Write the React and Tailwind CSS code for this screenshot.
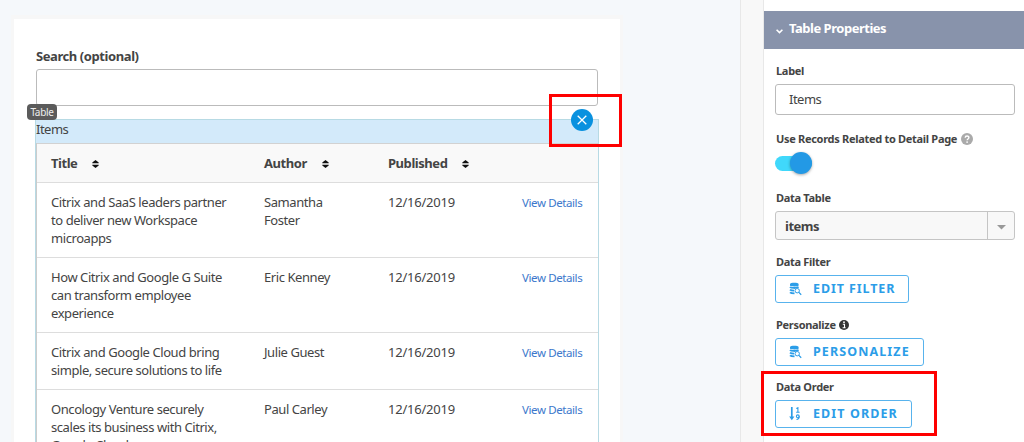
import React from "react";

const rows = [
  [["Citrix and SaaS leaders partner", "to deliver new Workspace", "microapps"], ["Samantha", "Foster"]],
  [["How Citrix and Google G Suite", "can transform employee", "experience"], ["Eric Kenney"]],
  [["Citrix and Google Cloud bring", "simple, secure solutions to life"], ["Julie Guest"]],
  [["Oncology Venture securely", "scales its business with Citrix,", "Google Cloud"], ["Paul Carley"]],
];

function Lines({ items }) {
  return items.map((t) => (
    <span key={t} className="block whitespace-nowrap">{t}</span>
  ));
}

function SortIcon() {
  return (
    <svg width="7" height="8" viewBox="0 0 7 8" className="mt-px" fill="#111">
      <path d="M3.500 0 6.700 2.600v.6H.3v-.6zM3.500 8 .3 5.400v-.6h6.400v.6z" />
    </svg>
  );
}

function DbSearchIcon() {
  return (
    <svg width="13" height="14" viewBox="0 0 13 14" fill="none" stroke="#2b9de8">
      <path d="M1 2c0-1.700 8.600-1.700 8.600 0v1.600c0 1.200-8.600 1.200-8.600 0z" fill="#2b9de8" stroke="none" />
      <path d="M1 5c1 1.200 6 1.200 8.600.2M1 7.600c1 .9 2.500 1 4 1M1 10.300c1 1 3 1.100 4.500 1.100" strokeWidth="1.900" />
      <circle cx="8.200" cy="8.700" r="2.200" strokeWidth="1" fill="#fff" />
      <path d="m9.900 10.400 2.300 2.300" strokeWidth="1.300" />
    </svg>
  );
}

function OrderIcon() {
  return (
    <svg width="13" height="14" viewBox="0 0 13 14" fill="none" stroke="#2b9de8">
      <path d="M2.800 0v11" strokeWidth="1.700" />
      <path d="M.2 9.500h5.200L2.800 13.200z" fill="#2b9de8" stroke="none" />
      <path d="M7.300 1.400 8.900.7V5M7.200 5.200h3.400" strokeWidth="1.100" />
      <circle cx="8.800" cy="9.300" r="1.400" strokeWidth="1.100" />
      <path d="M10.200 9.300c0 2-.5 3.200-2.700 3.200" strokeWidth="1.100" />
    </svg>
  );
}

function ActionButton({ icon, width, spacing, children }) {
  return (
    <button className={`flex h-7 items-center rounded-[3px] border border-[#58b3ed] bg-white pl-[13px] text-[12.500px] font-bold whitespace-nowrap text-[#2b9de8] ${spacing} ${width}`}>
      {icon}
      <span className="ml-[11px] pt-px">{children}</span>
    </button>
  );
}

function FieldLabel({ children }) {
  return <div className="flex h-4 items-center pl-px text-[11px] leading-4 font-bold tracking-[-0.3px] whitespace-nowrap">{children}</div>;
}

const columns = "grid grid-cols-[213px_124px_134px_1fr] pl-[14px]";

export default function App() {
  return (
    <div className="relative flex h-[442px] w-[1024px] overflow-hidden bg-[#f5f8fb] font-['Noto_Sans',sans-serif] text-[#444]">
      <main className="h-full w-[740px] pt-[15px] pl-[11px]">
        <section className="h-[600px] w-[612px] border-x-[3px] border-t-4 border-[#f7f7f7] bg-white pt-[29px] pl-[22px]">
          <label className="block h-[18px] text-[13px] leading-[17px] font-bold tracking-[-0.42px]">Search (optional)</label>
          <div className="mt-[3px] h-[37px] w-[562px] rounded-[3px] border border-[#bbb] bg-white" />
          <div className="relative mt-[13px] -ml-px h-[400px] w-[564px] border border-[#b7dae4]">
            <div className="h-[23px] bg-[#d3eafa] text-[13px] leading-[19px] tracking-[-0.5px]">Items</div>
            <div className="border-l border-[#ccc]">
              <div className={`${columns} h-10 items-center border-t border-b border-t-[#d2d2d2] border-b-[#ddd] bg-[#f9f9f9] text-[13px] font-bold tracking-[-0.45px]`}>
                <div className="flex items-center gap-[15px] pt-px">Title <SortIcon /></div>
                <div className="flex items-center gap-[15px] pt-px">Author <SortIcon /></div>
                <div className="flex items-center gap-[15px] pt-px">Published <SortIcon /></div>
              </div>
              {rows.map(([title, author]) => (
                <div key={title[0]} className={`${columns} border-b border-[#ddd] py-[10px] text-[13px] leading-[18px] tracking-[-0.43px]`}>
                  <div><Lines items={title} /></div>
                  <div><Lines items={author} /></div>
                  <div className="tracking-[-0.22px]">12/16/2019</div>
                  <a className="text-[11.500px] leading-[20px] tracking-[-0.4px] text-[#3c78cc]">View Details</a>
                </div>
              ))}
            </div>
            <div className="absolute -top-4 -left-[9px] h-4 w-[30px] rounded-[4px] bg-[#5b5b5b] text-center text-[10px] leading-4 tracking-[-0.3px] text-[#eee]">Table</div>
            <div className="absolute -top-[11px] left-[535px] flex size-[22px] items-center justify-center rounded-full bg-[#0991df]">
              <svg width="10" height="10" viewBox="0 0 10 10" stroke="#fff" strokeWidth="1.300"><path d="m.7.7 8.600 8.600M9.300.7.7 9.300" /></svg>
            </div>
          </div>
        </section>
      </main>

      <div className="h-full w-6 border-x border-[#e8e8e8] bg-[#f8f8f8]" />

      <aside className="h-full w-[260px] bg-white pt-[11px]">
        <header className="flex h-[38px] items-center bg-[#8893ab] pl-3 text-[13px] font-bold tracking-[-0.48px] text-white">
          <svg width="7" height="5" viewBox="0 0 7 5" fill="none" stroke="#fff" strokeWidth="1.600" className="mt-[3px]"><path d="m.6.7 2.900 2.900L6.400.7" /></svg>
          <span className="-mt-[2px] ml-[6px]">Table Properties</span>
        </header>
        <div className="pt-[14px] pl-[11px]">
          <FieldLabel>Label</FieldLabel>
          <div className="mt-[5px] h-[31px] w-[240px] rounded-[3px] border border-[#bbb] pl-[13px] text-[13px] leading-[29px] tracking-[-0.5px]">Items</div>
          <div className="mt-4">
            <FieldLabel>
              Use Records Related to Detail Page
              <svg width="12" height="12" viewBox="0 0 12 12" className="-mt-[1px] ml-[4px]"><circle cx="6" cy="6" r="6" fill="#aaa" /><path d="M4.200 4.700c0-2.200 3.700-2.200 3.700-.1 0 1.400-1.800 1.300-1.800 2.700" fill="none" stroke="#fff" strokeWidth="1.400" /><circle cx="6.100" cy="9.100" r=".85" fill="#fff" /></svg>
            </FieldLabel>
          </div>
          <div className="mt-[5px] flex h-[22px] items-center">
            <div className="flex h-[15px] w-[37px] items-center justify-end rounded-full bg-[#40d8fb]">
              <div className="size-[22px] shrink-0 rounded-full bg-[#2399e5] shadow-[0_1px_3px_rgba(0,0,0,0.35)]" />
            </div>
          </div>
          <div className="mt-4"><FieldLabel>Data Table</FieldLabel></div>
          <div className="mt-[5px] flex h-[29px] w-[240px] rounded-[3px] border border-[#c5c5c5] bg-[#f8f8f8]">
            <div className="w-[212px] border-r border-[#c5c5c5] pl-[9px] text-[13px] leading-[29px] font-bold tracking-[-0.5px]">items</div>
            <div className="flex flex-1 items-center justify-center">
              <svg width="9" height="5" viewBox="0 0 9 5" className="mt-1" fill="#999"><path d="M0 0h9L4.500 4.500z" /></svg>
            </div>
          </div>
          <div className="mt-[14px]"><FieldLabel>Data Filter</FieldLabel></div>
          <div className="mt-[5px]"><ActionButton spacing="tracking-[0.9px]" width="w-[134px]" icon={<DbSearchIcon />}>EDIT FILTER</ActionButton></div>
          <div className="mt-[14px]">
            <FieldLabel>
              Personalize
              <svg width="10" height="10" viewBox="0 0 10 10" className="ml-[3px]"><circle cx="5" cy="5" r="5" fill="#333" /><path d="M3.800 4.200h1.700V8M3.600 7.800h3" fill="none" stroke="#fff" strokeWidth="1.100" /><circle cx="5" cy="2.200" r=".9" fill="#fff" /></svg>
            </FieldLabel>
          </div>
          <div className="mt-[5px]"><ActionButton spacing="tracking-[1.100px]" width="w-[149px]" icon={<DbSearchIcon />}>PERSONALIZE</ActionButton></div>
          <div className="mt-[13px]"><FieldLabel>Data Order</FieldLabel></div>
          <div className="mt-[5px]"><ActionButton spacing="tracking-[1.100px]" width="w-[137px]" icon={<OrderIcon />}>EDIT ORDER</ActionButton></div>
        </div>
      </aside>

      <div className="pointer-events-none absolute top-[94px] left-[549px] h-[53px] w-[73px] border-[3px] border-[#fe0000]" />
      <div className="pointer-events-none absolute top-[371px] left-[761px] h-[65px] w-[176px] border-[3px] border-[#fe0000]" />
    </div>
  );
}
